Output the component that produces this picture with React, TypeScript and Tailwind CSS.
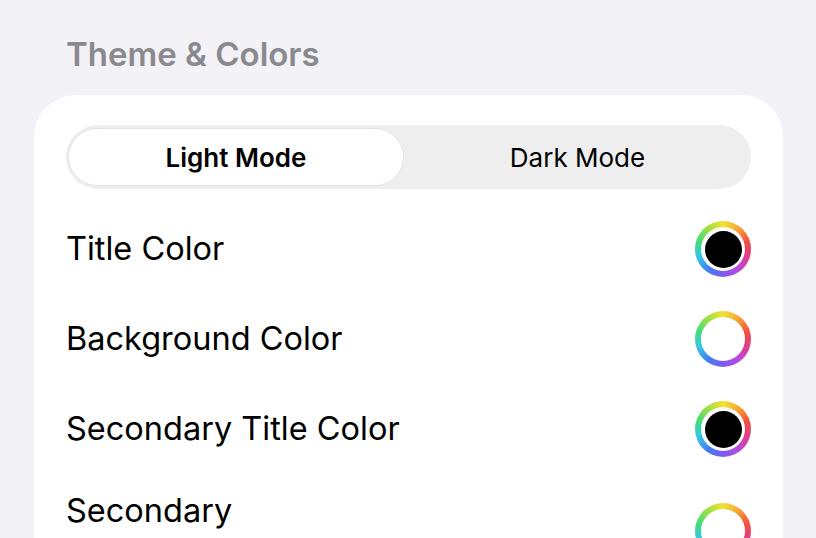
const rows = [
  { label: ['Title Color'], fill: 'black' },
  { label: ['Background Color'], fill: 'white' },
  { label: ['Secondary Title Color'], fill: 'black' },
  { label: ['Secondary', 'Background Color'], fill: 'white' },
]

function ColorWell({ fill }: { fill: string }) {
  return (
    <div className="flex h-[56px] w-[56px] shrink-0 items-center justify-center rounded-full bg-[conic-gradient(#f2e234,#f7a838,#f0503c,#e23d8c,#b64be0,#7d5af2,#3f7ff0,#37c6e8,#45dc78,#9ee043,#f2e234)]">
      <div className="flex h-[44px] w-[44px] items-center justify-center rounded-full bg-white">
        {fill === 'black' && <div className="h-[37px] w-[37px] rounded-full bg-black" />}
      </div>
    </div>
  )
}

export default function App() {
  return (
    <div className="h-[538px] w-[816px] overflow-hidden bg-[#f2f2f7] font-['Inter',sans-serif]">
      <h2 className="pl-[66px] pt-[34px] text-[33px] font-semibold leading-[40px] text-[#8a8a8e]">
        Theme &amp; Colors
      </h2>
      <div className="ml-[34px] mr-[33px] mt-[21px] rounded-[42px] bg-white px-[32px] pb-6 pt-[30px]">
        <div className="flex h-[64px] rounded-full bg-[#eeeeef] py-[3px] pl-[2px]">
          <button className="w-[336px] rounded-full border border-[#e3e3e6] bg-white text-[26px] font-semibold text-black">
            Light Mode
          </button>
          <button className="flex-1 text-[26px] text-black">Dark Mode</button>
        </div>
        <div className="mt-[15px]">
          {rows.map((row) => (
            <div key={row.label.join(' ')} className="flex items-center justify-between py-[17px]">
              <div className="text-[32.5px] leading-[40px] text-black">
                {row.label.map((line) => (
                  <div key={line}>{line}</div>
                ))}
              </div>
              <ColorWell fill={row.fill} />
            </div>
          ))}
        </div>
      </div>
    </div>
  )
}
